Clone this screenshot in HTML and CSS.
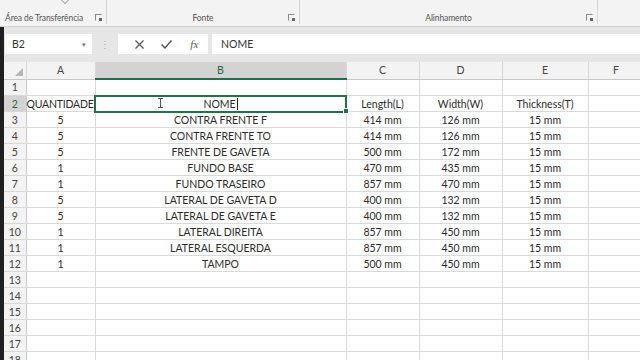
FILE: index.html
```html
<!DOCTYPE html>
<html lang="pt-BR">
<head>
  <meta charset="UTF-8" />
  <meta name="viewport" content="width=device-width, initial-scale=1.0" />
  <title>Planilha - Peças</title>
  <link rel="stylesheet" href="styles.css">
</head>
<body>
  <div class="ribbon">
    <div class="group g-clip">
      <span class="chevron"></span>
      <span class="group-label">Área de Transferência</span>
      <span class="launcher"></span>
    </div>
    <div class="group g-font">
      <span class="group-label center">Fonte</span>
      <span class="launcher"></span>
    </div>
    <div class="group g-align">
      <span class="group-label center">Alinhamento</span>
      <span class="launcher"></span>
    </div>
    <div class="group g-rest"></div>
  </div>

  <div class="workspace">
    <div class="formula-bar">
      <div class="name-box">
        <span>B2</span>
        <span class="name-arrow">&#9662;</span>
      </div>
      <div class="grip">&#8942;</div>
      <div class="fx-box">
        <span class="fx-btn">
          <svg width="11" height="11" viewBox="0 0 11 11"><path d="M1.5 1.5 L9.5 9.5 M9.5 1.5 L1.5 9.5" stroke="#555" stroke-width="1.2" fill="none"/></svg>
        </span>
        <span class="fx-btn">
          <svg width="13" height="11" viewBox="0 0 13 11"><path d="M1.5 5.5 L5 9 L11.5 1.5" stroke="#555" stroke-width="1.5" fill="none"/></svg>
        </span>
        <span class="fx-btn fx">fx</span>
      </div>
      <div class="formula-input">NOME</div>
    </div>

    <table class="sheet">
      <colgroup>
        <col class="c-row">
        <col class="c-a">
        <col class="c-b">
        <col class="c-c">
        <col class="c-d">
        <col class="c-e">
        <col class="c-f">
      </colgroup>
      <thead>
        <tr>
          <th class="corner"><span class="tri"></span></th>
          <th>A</th>
          <th class="active">B</th>
          <th>C</th>
          <th>D</th>
          <th>E</th>
          <th>F</th>
        </tr>
      </thead>
      <tbody id="rows"></tbody>
    </table>
  </div>

  <script>
    const data = [
      [],
      ['QUANTIDADE', 'NOME', 'Length(L)', 'Width(W)', 'Thickness(T)'],
      ['5', 'CONTRA FRENTE F', '414 mm', '126 mm', '15 mm'],
      ['5', 'CONTRA FRENTE TO', '414 mm', '126 mm', '15 mm'],
      ['5', 'FRENTE DE GAVETA', '500 mm', '172 mm', '15 mm'],
      ['1', 'FUNDO BASE', '470 mm', '435 mm', '15 mm'],
      ['1', 'FUNDO TRASEIRO', '857 mm', '470 mm', '15 mm'],
      ['5', 'LATERAL DE GAVETA D', '400 mm', '132 mm', '15 mm'],
      ['5', 'LATERAL DE GAVETA E', '400 mm', '132 mm', '15 mm'],
      ['1', 'LATERAL DIREITA', '857 mm', '450 mm', '15 mm'],
      ['1', 'LATERAL ESQUERDA', '857 mm', '450 mm', '15 mm'],
      ['1', 'TAMPO', '500 mm', '450 mm', '15 mm']
    ];

    const body = document.getElementById('rows');
    for (let r = 0; r < 18; r++) {
      const tr = document.createElement('tr');
      const head = document.createElement('th');
      head.textContent = r + 1;
      if (r === 1) head.className = 'active';
      tr.appendChild(head);
      const row = data[r] || [];
      for (let c = 0; c < 6; c++) {
        const td = document.createElement('td');
        td.textContent = row[c] || '';
        if (r === 1 && c === 0) td.className = 'overflow';
        if (r === 1 && c === 1) {
          td.className = 'selected';
          td.innerHTML = '<span class="ibeam"></span><span class="caret">NOME</span><span class="handle"></span>';
        }
        tr.appendChild(td);
      }
      body.appendChild(tr);
    }
  </script>
</body>
</html>
```

FILE: styles.css
```css
body {
  margin: 0;
  width: 640px;
  height: 360px;
  overflow: hidden;
  background: #e6e6e6;
  font-family: Lato, 'Open Sans', sans-serif;
  color: #333;
}
.ribbon {
  display: flex;
  height: 26px;
  background: #f3f3f3;
  border-bottom: 1px solid #d2d2d2;
}
.group {
  position: relative;
  height: 24px;
  border-right: 1px solid #d6d6d6;
  box-sizing: border-box;
}
.g-clip { width: 107px; }
.g-font { width: 193px; }
.g-align { width: 298px; }
.g-rest { flex: 1; border-right: none; }
.group-label {
  position: absolute;
  left: 5px;
  bottom: 1px;
  font-size: 8.5px;
  color: #555;
  letter-spacing: -0.1px;
}
.group-label.center {
  left: 0;
  right: 0;
  text-align: center;
}
.launcher {
  position: absolute;
  right: 4px;
  bottom: 3px;
  width: 5px;
  height: 5px;
  border: 1px solid #8a8a8a;
  border-right-color: transparent;
  border-bottom-color: transparent;
}
.launcher::after {
  content: '';
  position: absolute;
  right: -1px;
  bottom: -1px;
  width: 3px;
  height: 3px;
  background: #666;
}
.chevron {
  position: absolute;
  left: 62px;
  top: -3px;
  width: 5px;
  height: 5px;
  border-right: 1px solid #aaa;
  border-bottom: 1px solid #aaa;
  transform: rotate(45deg);
}
.workspace {
  border-left: 4px solid #1f1f1f;
  padding-top: 7px;
  height: 340px;
}
.formula-bar {
  display: flex;
  height: 20px;
  margin-bottom: 8px;
}
.name-box {
  display: flex;
  align-items: center;
  justify-content: space-between;
  width: 87px;
  margin-left: 1px;
  padding: 0 6px 0 7px;
  box-sizing: border-box;
  background: #fff;
  font-size: 10.5px;
  color: #333;
}
.name-arrow {
  font-size: 7px;
  color: #777;
}
.grip {
  width: 26px;
  text-align: center;
  line-height: 20px;
  font-size: 10px;
  color: #aaa;
}
.fx-box {
  display: flex;
  align-items: center;
  width: 90px;
  padding-left: 8px;
  box-sizing: border-box;
  background: #fff;
}
.fx-btn {
  width: 30px;
  display: flex;
  justify-content: center;
  align-items: center;
}
.fx {
  font-family: 'Liberation Serif', serif;
  font-style: italic;
  font-size: 11px;
  color: #555;
}
.formula-input {
  flex: 1;
  margin-left: 4px;
  padding-left: 9px;
  background: #fff;
  line-height: 20px;
  font-size: 10.5px;
  color: #333;
}
.sheet {
  border-collapse: collapse;
  table-layout: fixed;
  width: 640px;
  background: #fff;
  font-size: 10.5px;
}
.c-row { width: 22px; }
.c-a { width: 69px; }
.c-b { width: 251px; }
.c-c { width: 73px; }
.c-d { width: 83px; }
.c-e { width: 86px; }
.c-f { width: 56px; }
.sheet thead th {
  height: 16px;
  background: #f3f3f3;
  border-right: 1px solid #d8d8d8;
  border-bottom: 1px solid #c8c8c8;
  font-weight: normal;
  color: #444;
  padding: 0;
  font-size: 10.5px;
}
.sheet thead th.active {
  background: #d3d3d3;
  color: #1e6b40;
  border-bottom: 2px solid #217346;
}
.corner {
  position: relative;
}
.tri {
  position: absolute;
  right: 3px;
  bottom: 3px;
  width: 0;
  height: 0;
  border-left: 8px solid transparent;
  border-bottom: 8px solid #b5b5b5;
}
.sheet tbody th {
  height: 15px;
  background: #f3f3f3;
  border-right: 1px solid #c8c8c8;
  border-bottom: 1px solid #d8d8d8;
  font-weight: normal;
  color: #444;
  padding: 0;
  text-align: center;
}
.sheet tbody th.active {
  background: #d3d3d3;
  color: #1e6b40;
}
.sheet td {
  height: 15px;
  padding: 0;
  border-right: 1px solid #dadada;
  border-bottom: 1px solid #dadada;
  text-align: center;
  white-space: nowrap;
  overflow: hidden;
  color: #2b2b2b;
}
.sheet td.overflow {
  overflow: visible;
  text-align: left;
  letter-spacing: -0.2px;
}
.sheet td.selected {
  position: relative;
  overflow: visible;
  outline: 2px solid #217346;
  outline-offset: -1px;
}
.caret {
  border-right: 1px solid #222;
  padding-right: 1px;
}
.ibeam {
  position: absolute;
  left: 62px;
  top: 2px;
  width: 5px;
  height: 10px;
  border-top: 1px solid #555;
  border-bottom: 1px solid #555;
  box-sizing: border-box;
}
.ibeam::after {
  content: '';
  position: absolute;
  left: 2px;
  top: 0;
  width: 1px;
  height: 8px;
  background: #555;
}
.handle {
  position: absolute;
  right: -3px;
  bottom: -3px;
  width: 4px;
  height: 4px;
  background: #217346;
  border: 1px solid #fff;
}
```
